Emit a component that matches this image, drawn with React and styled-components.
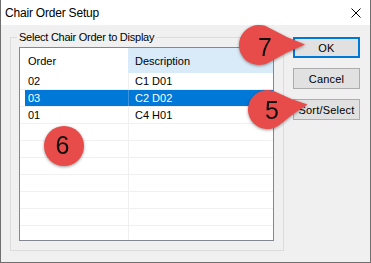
import React from "react";
import styled, { createGlobalStyle } from "styled-components";

const Global = createGlobalStyle`
  html, body { margin: 0; padding: 0; background: #ffffff; }
  body { font-family: "Liberation Sans", Arial, sans-serif; }
`;

const Window = styled.div`
  position: relative;
  width: 371px;
  height: 263px;
  box-sizing: border-box;
  border: 1px solid #6f6f6f;
  border-top: none;
  background: #f0f0f0;
  display: flex;
  flex-direction: column;
  overflow: hidden;
`;

const TitleBar = styled.div`
  height: 25px;
  flex: none;
  background: #ffffff;
  display: flex;
  align-items: center;
  justify-content: space-between;
  padding: 0 9px 0 4px;
`;

const Title = styled.span`
  font-size: 12px;
  letter-spacing: -0.2px;
  color: #000;
`;

const Body = styled.div`
  flex: 1;
  display: flex;
  align-items: flex-start;
  gap: 9px;
  padding: 6px 10px 11px 9px;
`;

const Group = styled.fieldset`
  margin: 0;
  width: 274px;
  box-sizing: border-box;
  padding: 3px 9px 9px 8px;
  border: 1px solid #dcdcdc;
  min-inline-size: 0;
`;

const Legend = styled.legend`
  font-size: 11px;
  line-height: 13px;
  letter-spacing: -0.25px;
  padding: 0 2px;
  margin-left: -2px;
  color: #000;
`;

const List = styled.div`
  width: 255px;
  height: 194px;
  box-sizing: border-box;
  border: 1px solid #828790;
  background: #ffffff;
  overflow: hidden;
`;

const Header = styled.div`
  display: grid;
  grid-template-columns: 108px 1fr;
  height: 25px;
`;

const HeadCell = styled.div`
  display: flex;
  align-items: center;
  font-size: 11px;
  padding-left: ${(p) => (p.$first ? "8px" : "7px")};
  background: ${(p) => (p.$hot ? "#d9ebf9" : "#ffffff")};
`;

const Row = styled.div`
  display: grid;
  grid-template-columns: 108px 1fr;
  height: 17px;
  box-sizing: border-box;
  border-bottom: 1px solid #f0f0f0;
  font-size: 11px;
  color: ${(p) => (p.$selected ? "#ffffff" : "#000000")};
  background: ${(p) =>
    p.$selected
      ? "linear-gradient(to right, transparent 5px, #0078d7 5px)"
      : "transparent"};
`;

const Cell = styled.div`
  display: flex;
  align-items: center;
  padding-left: ${(p) => (p.$first ? "8px" : "6px")};
  border-left: ${(p) => (p.$first ? "none" : "1px solid #f0f0f0")};
  border-left-color: ${(p) => (p.$selected ? "#3a95de" : "#f0f0f0")};
`;

const Buttons = styled.div`
  display: flex;
  flex-direction: column;
  gap: 10px;
  margin-top: 6px;
`;

const Button = styled.button`
  width: 67px;
  height: 21px;
  box-sizing: border-box;
  margin: 0;
  padding: 0;
  font-family: "Liberation Sans", Arial, sans-serif;
  font-size: 11px;
  letter-spacing: 0.2px;
  color: #000;
  background: #e1e1e1;
  border: ${(p) => (p.$focused ? "2px solid #0078d7" : "1px solid #adadad")};
`;

const PinSvg = styled.svg`
  position: absolute;
  overflow: visible;
  filter: drop-shadow(0 1px 1.5px rgba(0, 0, 0, 0.4));
`;

const rows = [
  { order: "02", desc: "C1 D01" },
  { order: "03", desc: "C2 D02", selected: true },
  { order: "01", desc: "C4 H01" },
  {}, {}, {}, {}, {}, {}, {},
];

function pinPath(r, tx, ty) {
  if (!tx && !ty) {
    return `M ${-r} 0 A ${r} ${r} 0 1 0 ${r} 0 A ${r} ${r} 0 1 0 ${-r} 0 Z`;
  }
  const d = Math.hypot(tx, ty);
  const phi = Math.atan2(ty, tx);
  const a = Math.acos(r / d);
  const p1 = [r * Math.cos(phi - a), r * Math.sin(phi - a)];
  const p2 = [r * Math.cos(phi + a), r * Math.sin(phi + a)];
  const ux = tx / d;
  const uy = ty / d;
  const ctrl = (p) => {
    const mx = (p[0] + tx) / 2;
    const my = (p[1] + ty) / 2;
    const t = mx * ux + my * uy;
    return [mx + (t * ux - mx) * 0.2, my + (t * uy - my) * 0.2];
  };
  const c1 = ctrl(p1);
  const c2 = ctrl(p2);
  return `M ${tx} ${ty} Q ${c1[0]} ${c1[1]} ${p1[0]} ${p1[1]} A ${r} ${r} 0 1 0 ${p2[0]} ${p2[1]} Q ${c2[0]} ${c2[1]} ${tx} ${ty} Z`;
}

const Pin = ({ cx, cy, r, tx = 0, ty = 0, label, dx = 0, dy = 0 }) => {
  const left = -r - 4;
  const top = -r - 4;
  const w = r * 2 + 8 + Math.max(0, tx - r);
  const h = r * 2 + 8;
  return (
    <PinSvg
      width={w}
      height={h}
      viewBox={`${left} ${top} ${w} ${h}`}
      style={{ left: cx + left, top: cy + top }}
    >
      <path d={pinPath(r, tx, ty)} fill="#e84c4a" />
      <text
        x={dx}
        y={dy + 9}
        textAnchor="middle"
        fontSize="25"
        fontFamily="Liberation Sans, Arial, sans-serif"
        fill="#111"
      >
        {label}
      </text>
    </PinSvg>
  );
};

export default function App() {
  return (
    <>
      <Global />
      <Window>
        <TitleBar>
          <Title>Chair Order Setup</Title>
          <svg width="10" height="10" viewBox="0 0 10 10">
            <path d="M0.5 0.5 L9.5 9.5 M9.5 0.5 L0.5 9.5" stroke="#000" strokeWidth="1" />
          </svg>
        </TitleBar>
        <Body>
          <Group>
            <Legend>Select Chair Order to Display</Legend>
            <List>
              <Header>
                <HeadCell $first>Order</HeadCell>
                <HeadCell $hot>Description</HeadCell>
              </Header>
              {rows.map((r, i) => (
                <Row key={i} $selected={r.selected}>
                  <Cell $first>{r.order}</Cell>
                  <Cell $selected={r.selected}>{r.desc}</Cell>
                </Row>
              ))}
            </List>
          </Group>
          <Buttons>
            <Button $focused>OK</Button>
            <Button>Cancel</Button>
            <Button>Sort/Select</Button>
          </Buttons>
        </Body>
        <Pin cx={258} cy={45} r={20} tx={46} ty={-0.5} label="7" dx={6} dy={2} />
        <Pin cx={266} cy={109.5} r={19.5} tx={40} ty={-5} label="5" dx={4.5} dy={0} />
        <Pin cx={63} cy={146} r={20} label="6" dx={-1.5} dy={-1} />
      </Window>
    </>
  );
}
